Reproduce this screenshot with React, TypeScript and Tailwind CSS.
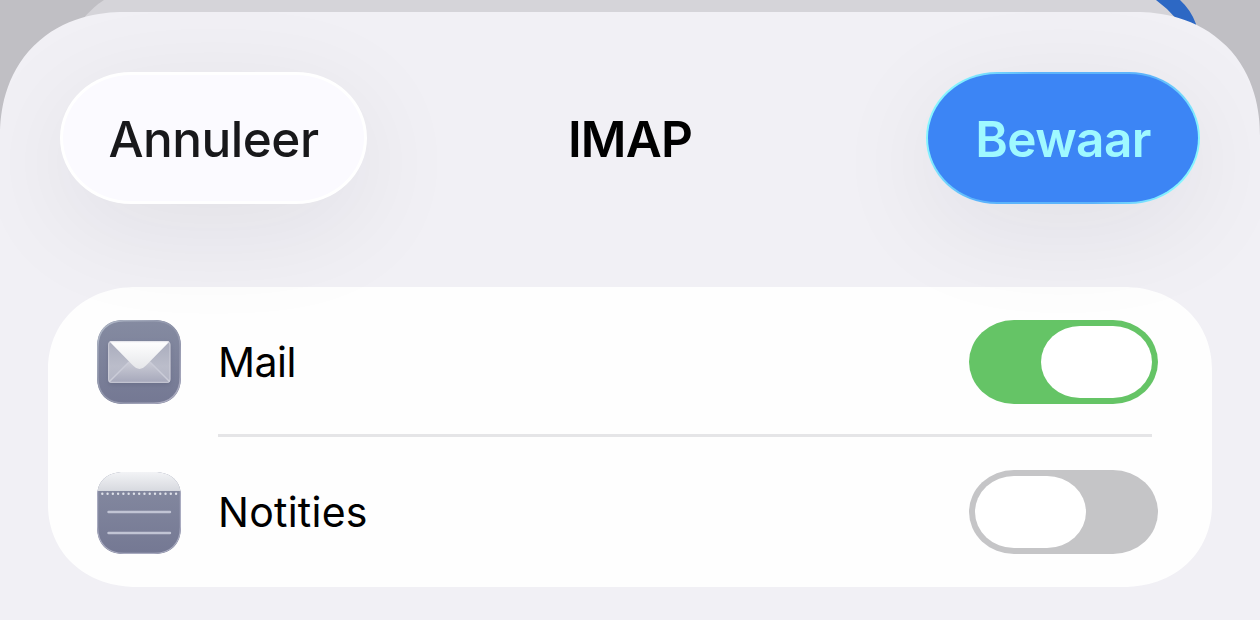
import React, { useState } from "react";

const MailIcon = () => (
    <svg viewBox="0 0 84 84" className="w-[84px] h-[84px] shrink-0" aria-hidden="true">
        <defs>
            <linearGradient id="tile" x1="0" y1="0" x2="0" y2="1">
                <stop offset="0" stopColor="#858ba1" />
                <stop offset="1" stopColor="#747893" />
            </linearGradient>
            <linearGradient id="body" x1="0" y1="0" x2="0" y2="1">
                <stop offset="0" stopColor="#a9acbd" />
                <stop offset="0.6" stopColor="#bbbdca" />
                <stop offset="1" stopColor="#b3b5c5" />
            </linearGradient>
            <linearGradient id="fold" x1="0" y1="0" x2="0" y2="1">
                <stop offset="0" stopColor="#cfd0d9" />
                <stop offset="1" stopColor="#a5a7ba" />
            </linearGradient>
            <linearGradient id="flap" x1="0" y1="0" x2="0" y2="1">
                <stop offset="0" stopColor="#ffffff" />
                <stop offset="1" stopColor="#e6e7ea" />
            </linearGradient>
            <linearGradient id="rim" x1="0" y1="0" x2="1" y2="1">
                <stop offset="0" stopColor="#b3bbc9" />
                <stop offset="0.5" stopColor="#8e93a9" />
                <stop offset="1" stopColor="#b0b0c4" />
            </linearGradient>
            <clipPath id="envelope">
                <rect x="11" y="21" width="62.500" height="42" rx="4" />
            </clipPath>
            <filter id="soft" x="-20%" y="-20%" width="140%" height="150%">
                <feGaussianBlur stdDeviation="2" />
            </filter>
        </defs>
        <path d="M27 0H57C74 0 84 10 84 27V57C84 74 74 84 57 84H27C10 84 0 74 0 57V27C0 10 10 0 27 0Z" fill="url(#tile)" />
        <path d="M27 .8H57C73.500 .8 83.200 10.500 83.200 27V57C83.200 73.500 73.500 83.200 57 83.200H27C10.500 83.200 .8 73.500 .8 57V27C.8 10.500 10.500 .8 27 .8Z" fill="none" stroke="url(#rim)" strokeWidth="1.500" />
        <rect x="11" y="23" width="62.500" height="42" rx="4" fill="#5c607c" opacity="0.45" filter="url(#soft)" />
        <g clipPath="url(#envelope)">
            <rect x="11" y="21" width="63" height="42" fill="url(#body)" />
            <path d="M11 63L34 40H51L74 63Z" fill="url(#fold)" />
            <path d="M12 62L32 42M73 62L53 42" stroke="#cbccd8" strokeWidth="1.500" />
            <path d="M12 21H73L49 45.500Q42.500 52.500 36 45.500Z" fill="url(#flap)" />
        </g>
        <rect x="11.600" y="21.600" width="61.300" height="40.800" rx="3.500" fill="none" stroke="#d5d6df" strokeWidth="1.200" opacity="0.6" />
    </svg>
);

const NotesIcon = () => (
    <svg viewBox="0 0 84 84" className="w-[84px] h-[84px] shrink-0" aria-hidden="true">
        <defs>
            <linearGradient id="notesTile" x1="0" y1="0" x2="0" y2="1">
                <stop offset="0" stopColor="#878ca2" />
                <stop offset="1" stopColor="#747893" />
            </linearGradient>
            <linearGradient id="notesTop" x1="0" y1="0" x2="0" y2="1">
                <stop offset="0" stopColor="#f5f6f8" />
                <stop offset="1" stopColor="#d7d9df" />
            </linearGradient>
            <clipPath id="notesClip">
                <path d="M27 2H57C74 2 84 11 84 27V57C84 74 74 84 57 84H27C10 84 0 74 0 57V27C0 11 10 2 27 2Z" />
            </clipPath>
        </defs>
        <g clipPath="url(#notesClip)">
            <rect width="84" height="84" fill="url(#notesTile)" />
            <rect width="84" height="21" fill="url(#notesTop)" />
            <path d="M.6 21V57C.6 73.500 10.500 83.400 27 83.400H57C73.500 83.400 83.400 73.500 83.400 57V21" fill="none" stroke="#a9abc0" strokeWidth="1.200" />
        </g>
        <path d="M5.300 23.800H80" stroke="#dfe1e9" strokeWidth="2.400" strokeLinecap="round" strokeDasharray="0 5.270" />
        <path d="M11.500 42H73M11.500 63H73" stroke="#c1c4d4" strokeWidth="2.400" strokeLinecap="round" />
    </svg>
);

const services = [
    { name: "Mail", icon: MailIcon, label: "tracking-[-0.5px]" },
    { name: "Notities", icon: NotesIcon, label: "tracking-[0.25px]" },
];

const Toggle = ({ on, label, onClick }: { on: boolean; label: string; onClick: () => void }) => (
    <button
        role="switch"
        aria-checked={on}
        aria-label={label}
        onClick={onClick}
        className={`flex w-[189px] h-[84px] p-1.5 rounded-[45px/42px] ${on ? "bg-[#65c466] justify-end" : "bg-[#c5c5c7] justify-start"}`}
    >
        <span className="block w-[111px] h-[72px] bg-white rounded-[39px/36px]" />
    </button>
);

const App = () => {
    const [enabled, setEnabled] = useState<Record<string, boolean>>({ Mail: true, Notities: false });

    const toggle = (name: string) => setEnabled({ ...enabled, [name]: !enabled[name] });

    return (
        <div className="relative w-[1260px] h-[620px] overflow-hidden bg-[#c0bfc4] pt-3 font-[Inter,'Liberation_Sans',sans-serif]">
            {/* Screen behind the sheet */}
            <svg viewBox="0 0 1260 40" className="absolute top-0 left-0 w-[1260px] h-10" aria-hidden="true">
                <path d="M104 0Q94 6 82 20V40H1190V20L1157 0Z" fill="#d5d4d9" />
                <path d="M1156 0H1180Q1191 10 1196 24V40H1190Q1178 16 1156 0Z" fill="#2d68c4" />
            </svg>

            {/* Sheet */}
            <div className="relative h-[800px] bg-[#f1f0f5] rounded-t-[124px] [corner-shape:superellipse(1.12)] px-12 pt-[60px] overflow-hidden">
                <header className="grid grid-cols-[1fr_auto_1fr] items-center px-3 h-[132px]">
                    <button className="justify-self-start w-[307px] h-[132px] pt-0.5 bg-[#fbfaff] border-[3px] border-white rounded-[71px/66px] text-[49.500px] font-medium tracking-[-0.5px] text-[#18181b] shadow-[0_24px_110px_rgba(30,30,40,0.075)]">
                        Annuleer
                    </button>
                    <h1 className="pt-0.5 text-[49.500px] font-semibold tracking-[-0.8px] text-black">IMAP</h1>
                    <button className="justify-self-end w-[274px] h-[132px] pt-0.5 [background:linear-gradient(#3c85f5,#3c85f5)_padding-box,linear-gradient(115deg,#86f4ff_10%,#5cb4fb_32%,#5cb4fb_68%,#86f4ff_90%)_border-box] border-2 border-transparent rounded-[71px/66px] text-[49.500px] font-semibold tracking-[-0.6px] text-[#9ff9ff] shadow-[0_24px_110px_rgba(30,30,40,0.075)]">
                        Bewaar
                    </button>
                </header>

                {/* Services of the account */}
                <ul className="mt-[83px] h-[300px] bg-[#fefefe] rounded-[88px/82px] [corner-shape:superellipse(1.06)]">
                    {services.map(({ name, icon: Icon, label }, index) => (
                        <li key={name} className="flex items-center h-[150px] pl-[49px]">
                            <Icon />
                            <div className={`flex flex-1 items-center justify-between h-full ml-[37px] mr-[60px] ${index === 0 ? "pt-[3px] border-b-[3px] border-[#e5e5e7]" : ""}`}>
                                <span className={`pt-0.5 text-[41px] text-black ${label}`}>{name}</span>
                                <span className="-mr-1.5">
                                    <Toggle on={enabled[name]} label={name} onClick={() => toggle(name)} />
                                </span>
                            </div>
                        </li>
                    ))}
                </ul>
            </div>
        </div>
    );
};

export default App;
